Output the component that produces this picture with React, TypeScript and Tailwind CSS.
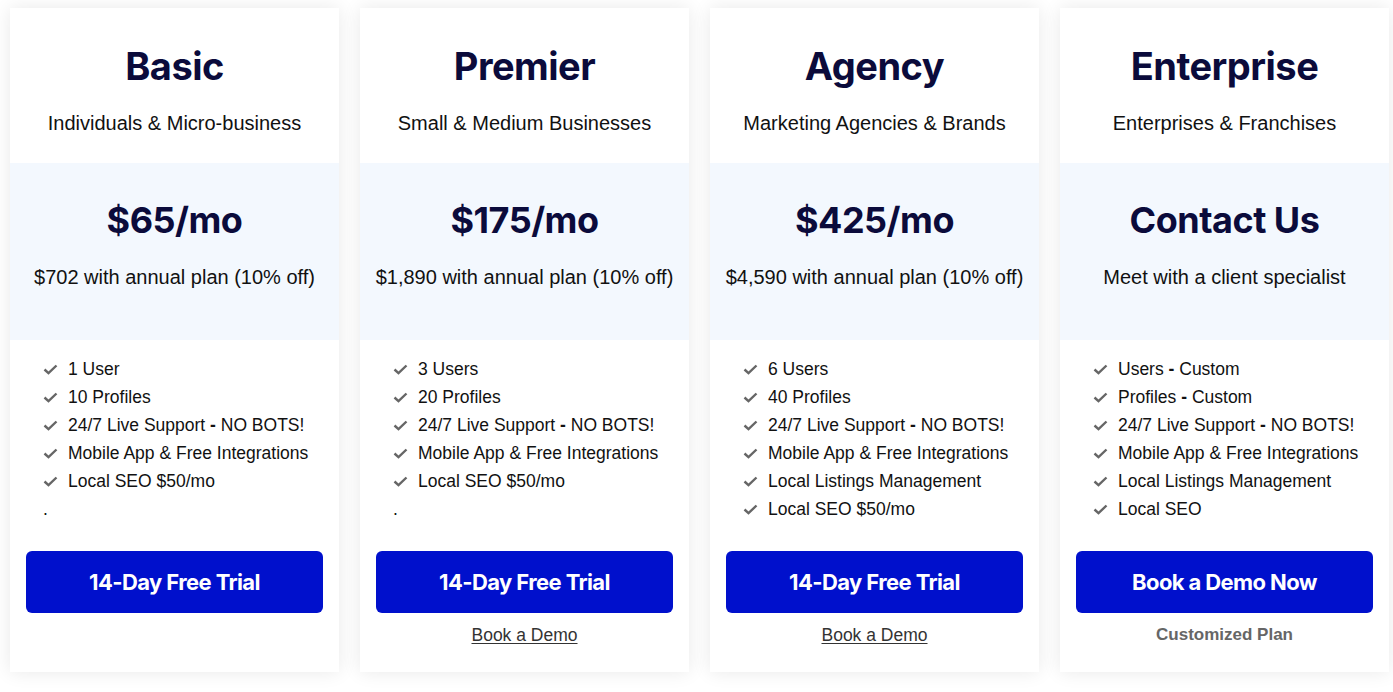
type Plan = {
  name: string;
  tagline: string;
  price: string;
  annual: string;
  features: React.ReactNode[];
  cta: string;
  footer?: "link" | "note";
};

const plans: Plan[] = [
  {
    name: "Basic",
    tagline: "Individuals & Micro-business",
    price: "$65/mo",
    annual: "$702 with annual plan (10% off)",
    features: [
      "1 User",
      "10 Profiles",
      <>24/7 Live Support <b>-</b> NO BOTS!</>,
      "Mobile App & Free Integrations",
      "Local SEO $50/mo",
    ],
    cta: "14-Day Free Trial",
  },
  {
    name: "Premier",
    tagline: "Small & Medium Businesses",
    price: "$175/mo",
    annual: "$1,890 with annual plan (10% off)",
    features: [
      "3 Users",
      "20 Profiles",
      <>24/7 Live Support <b>-</b> NO BOTS!</>,
      "Mobile App & Free Integrations",
      "Local SEO $50/mo",
    ],
    cta: "14-Day Free Trial",
    footer: "link",
  },
  {
    name: "Agency",
    tagline: "Marketing Agencies & Brands",
    price: "$425/mo",
    annual: "$4,590 with annual plan (10% off)",
    features: [
      "6 Users",
      "40 Profiles",
      <>24/7 Live Support <b>-</b> NO BOTS!</>,
      "Mobile App & Free Integrations",
      "Local Listings Management",
      "Local SEO $50/mo",
    ],
    cta: "14-Day Free Trial",
    footer: "link",
  },
  {
    name: "Enterprise",
    tagline: "Enterprises & Franchises",
    price: "Contact Us",
    annual: "Meet with a client specialist",
    features: [
      <>Users <b>-</b> Custom</>,
      <>Profiles <b>-</b> Custom</>,
      <>24/7 Live Support <b>-</b> NO BOTS!</>,
      "Mobile App & Free Integrations",
      "Local Listings Management",
      "Local SEO",
    ],
    cta: "Book a Demo Now",
    footer: "note",
  },
];

const Check = () => (
  <svg width="15" height="11" viewBox="0 0 15 11" className="shrink-0">
    <polyline
      points="1.5,5.5 5.5,9.2 13.5,1.5"
      fill="none"
      stroke="#666"
      strokeWidth="2.4"
    />
  </svg>
);

const PlanCard = ({ plan }: { plan: Plan }) => {
  return (
    <div className="flex flex-col w-[329px] h-[664px] bg-white shadow-[0_0_18px_rgba(0,0,0,0.09)]">
      <div className="flex flex-col items-center h-[155px] pt-[35px]">
        <h2 className="font-['Inter',sans-serif] font-bold text-[38px] leading-[46px] tracking-[-0.5px] text-[#0b0b3b]">
          {plan.name}
        </h2>
        <p className="mt-[22px] text-[20px] leading-[24px] text-[#111]">
          {plan.tagline}
        </p>
      </div>
      <div className="flex flex-col items-center h-[177px] pt-[36px] bg-[#f3f8fe]">
        <p className="font-['Inter',sans-serif] font-bold text-[36px] leading-[43px] tracking-[-0.5px] text-[#0b0b3b]">
          {plan.price}
        </p>
        <p className="mt-[23px] text-[20px] leading-[24px] text-[#111]">
          {plan.annual}
        </p>
      </div>
      <ul className="flex flex-col pt-[15px] pl-[33px] h-[211px]">
        {plan.features.map((f, i) => (
          <li key={i} className="flex items-center gap-[10px] h-[28px] text-[17.5px] text-[#111]">
            <Check />
            <span>{f}</span>
          </li>
        ))}
        {plan.features.length < 6 && (
          <li className="h-[28px] leading-[28px] text-[17.5px] text-[#111]">.</li>
        )}
      </ul>
      <div className="flex flex-col items-center px-4">
        <button className="w-full h-[62px] rounded-[6px] bg-[#0010cc] text-white font-['Inter',sans-serif] font-bold text-[22px] tracking-[-0.6px]">
          {plan.cta}
        </button>
        {plan.footer === "link" && (
          <a className="mt-[12px] text-[17.5px] leading-[20px] text-[#333] underline underline-offset-2">
            Book a Demo
          </a>
        )}
        {plan.footer === "note" && (
          <p className="mt-[12px] text-[17px] leading-[20px] font-bold text-[#666]">
            Customized Plan
          </p>
        )}
      </div>
    </div>
  );
};

export default function App() {
  return (
    <div className="w-[1393px] h-[692px] bg-white pt-[8px] pl-[10px] font-['Liberation_Sans',Arial,sans-serif]">
      <div className="flex gap-[21px]">
        {plans.map((p) => (
          <PlanCard key={p.name} plan={p} />
        ))}
      </div>
    </div>
  );
}
